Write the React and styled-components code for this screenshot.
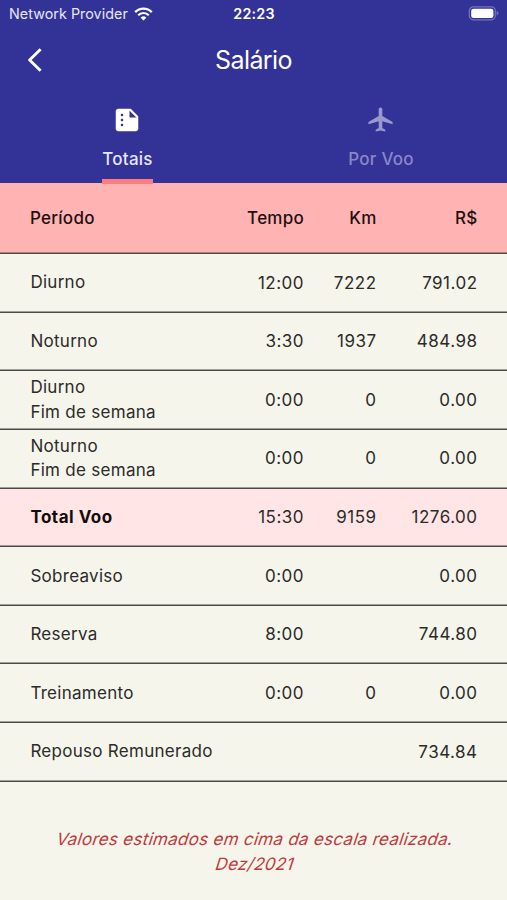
import React from 'react'
import styled, { createGlobalStyle } from 'styled-components'
import { MdSummarize, MdAirplanemodeActive } from 'react-icons/md'

const rows = [
  { label: 'Diurno', time: '12:00', km: '7222', value: '791.02' },
  { label: 'Noturno', time: '3:30', km: '1937', value: '484.98' },
  { label: 'Diurno\nFim de semana', time: '0:00', km: '0', value: '0.00' },
  { label: 'Noturno\nFim de semana', time: '0:00', km: '0', value: '0.00' },
  { label: 'Total Voo', time: '15:30', km: '9159', value: '1276.00', total: true },
  { label: 'Sobreaviso', time: '0:00', km: '', value: '0.00' },
  { label: 'Reserva', time: '8:00', km: '', value: '744.80' },
  { label: 'Treinamento', time: '0:00', km: '0', value: '0.00' },
  { label: 'Repouso Remunerado', time: '', km: '', value: '734.84' }
]

const WifiIcon = () =>
  <svg width='19' height='14' viewBox='0 0 19 14' fill='none' stroke='#fff'>
    <path d='M1.2 5.1a11.7 11.7 0 0 1 16.6 0' strokeWidth='2.3' />
    <path d='M4.2 8.2a7.5 7.5 0 0 1 10.6 0' strokeWidth='2.2' />
    <path d='M9.5 13.6 6.6 10.7a4.1 4.1 0 0 1 5.8 0z' fill='#fff' stroke='none' />
  </svg>

const BatteryIcon = () =>
  <svg width='31' height='15' viewBox='0 0 31 15'>
    <rect x='1.3' y='0.8' width='26' height='13' rx='4' fill='none' stroke='#7574bb' strokeWidth='1.2' />
    <rect x='3.2' y='2.7' width='22.2' height='9.2' rx='2.2' fill='#fff' />
    <path d='M28.6 5.1c1.2.4 1.9 1.2 1.9 2.2s-.7 1.8-1.9 2.2z' fill='#7574bb' />
  </svg>

const BackIcon = () =>
  <svg width='16' height='26' viewBox='0 0 16 26' fill='none'>
    <path d='M13.6 2.2 2.6 13l11 10.8' stroke='#fff' strokeWidth='2.9' strokeLinejoin='round' />
  </svg>

const Row = ({ label, time, km, value, total }) =>
  <S.Row $total={total}>
    <S.Label $bold={total}>{label}</S.Label>
    <S.Cell>{time}</S.Cell>
    <S.Cell>{km}</S.Cell>
    <S.Cell>{value}</S.Cell>
  </S.Row>

const App = () =>
  <>
    <GlobalStyle />
    <S.Screen>
      <S.Header>
        <S.StatusBar>
          <S.Carrier>Network Provider <WifiIcon /></S.Carrier>
          <S.Clock>22:23</S.Clock>
          <S.Battery><BatteryIcon /></S.Battery>
        </S.StatusBar>
        <S.TitleBar>
          <S.Back aria-label='Voltar'><BackIcon /></S.Back>
          <S.Title>Salário</S.Title>
        </S.TitleBar>
        <S.Tabs>
          <S.Tab $active>
            <MdSummarize size={30} />
            <S.TabLabel $active>Totais</S.TabLabel>
          </S.Tab>
          <S.Tab>
            <MdAirplanemodeActive size={29} />
            <S.TabLabel>Por Voo</S.TabLabel>
          </S.Tab>
        </S.Tabs>
      </S.Header>
      <S.TableHead>
        <span>Período</span>
        <S.Cell>Tempo</S.Cell>
        <S.Cell>Km</S.Cell>
        <S.Cell>R$</S.Cell>
      </S.TableHead>
      {rows.map(row => <Row key={row.label} {...row} />)}
      <S.Note>
        <S.NoteLine>Valores estimados em cima da escala realizada.</S.NoteLine>
        <S.NoteLine>Dez/2021</S.NoteLine>
      </S.Note>
    </S.Screen>
  </>

const GlobalStyle = createGlobalStyle`
  * {
    box-sizing: border-box;
  }

  body {
    margin: 0;
    font-family: Inter, 'Liberation Sans', sans-serif;
    background: #f5f5ec;
  }
`

const TableLine = styled.div`
  display: grid;
  grid-template-columns: 190px 84px 72.5px 1fr;
  align-items: center;
  padding: 0 29.5px 1.6px 30px;
  font-size: 17px;
  letter-spacing: 0.48px;
  box-shadow: inset 0 -1.6px #4a4a46;
`

const S = {
  Screen: styled.div`
    width: 507px;
    height: 900px;
    overflow: hidden;
    background: #f5f5ec;
  `,
  Header: styled.header`
    height: 183px;
    color: #fff;
    background: #333296;
  `,
  StatusBar: styled.div`
    display: grid;
    grid-template-columns: 1fr auto 1fr;
    align-items: center;
    height: 27px;
    padding: 0 8px 0 9px;
    font-size: 14.3px;
  `,
  Carrier: styled.div`
    display: flex;
    align-items: center;
    gap: 6px;
    color: #e6e6f8;
    letter-spacing: 0.05px;
    white-space: nowrap;
  `,
  Clock: styled.div`
    font-weight: 600;
    letter-spacing: 0.2px;
  `,
  Battery: styled.div`
    display: flex;
    justify-content: flex-end;
  `,
  TitleBar: styled.div`
    display: grid;
    grid-template-columns: 60px 1fr 60px;
    align-items: center;
    height: 66px;
  `,
  Back: styled.button`
    display: flex;
    padding: 0 0 0 27px;
    background: none;
    border: 0;
  `,
  Title: styled.h1`
    margin: 0;
    font-size: 25px;
    font-weight: 400;
    letter-spacing: -0.6px;
    text-align: center;
  `,
  Tabs: styled.nav`
    display: grid;
    grid-template-columns: 1fr 1fr;
    height: 91px;
  `,
  Tab: styled.div`
    display: flex;
    flex-direction: column;
    align-items: center;
    justify-content: space-between;
    padding-top: 11.5px;
    color: ${props => props.$active ? '#fff' : '#9a99cd'};
  `,
  TabLabel: styled.span`
    height: 38px;
    margin-left: 1.5px;
    font-size: 17px;
    font-weight: 500;
    line-height: 26px;
    letter-spacing: 0.25px;
    color: ${props => props.$active ? '#e6e6fa' : '#8988c4'};
    border-bottom: 5px solid ${props => props.$active ? '#ff7c7c' : 'transparent'};
  `,
  TableHead: styled(TableLine)`
    height: 71px;
    padding-top: 1px;
    font-weight: 500;
    letter-spacing: 0.25px;
    color: #1f1010;
    background: #ffb3b3;
  `,
  Row: styled(TableLine)`
    height: 58.65px;
    color: #2b2b29;
    background: ${props => props.$total ? '#ffe5e5' : 'transparent'};
  `,
  Label: styled.span`
    padding-left: 0.4px;
    font-weight: ${props => props.$bold ? 700 : 400};
    line-height: 24.4px;
    letter-spacing: ${props => props.$bold ? '0.5px' : '0.28px'};
    color: ${props => props.$bold ? '#150c0c' : 'inherit'};
    white-space: pre;
  `,
  Cell: styled.span`
    text-align: right;
  `,
  Note: styled.p`
    display: flex;
    flex-direction: column;
    align-items: center;
    margin: 45.5px 0 0;
    padding-left: 3px;
    font-size: 17px;
    line-height: 24.4px;
    letter-spacing: 0.28px;
    color: #bf3a3c;
  `,
  // slanted roman letters, Inter's true italic has other shapes
  NoteLine: styled.span`
    transform: skewX(-18deg);
  `
}

export default App
